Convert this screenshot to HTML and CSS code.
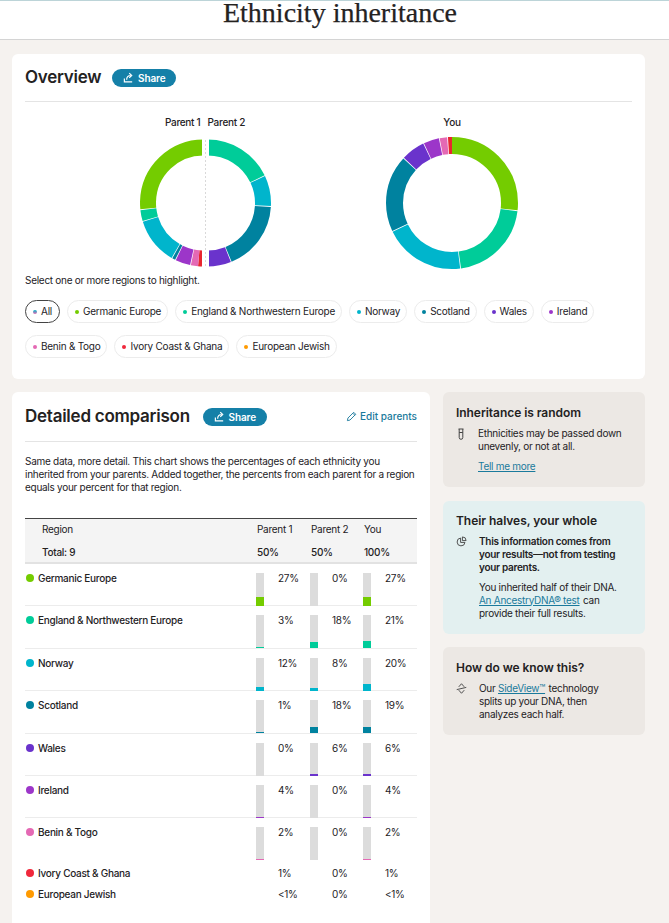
FILE: index.html
```html
<!DOCTYPE html>
<html lang="en">
  <head>
    <meta charset="UTF-8" />
    <meta name="viewport" content="width=device-width, initial-scale=1.0" />
    <title>Ethnicity inheritance</title>
    <link rel="stylesheet" href="styles.css">
  </head>

  <body>
    <header class="top-bar">
      <h1>Ethnicity inheritance</h1>
    </header>

    <main class="page">
      <section class="card overview">
        <div class="card-head">
          <h2>Overview</h2>
          <button class="share" type="button">
            <svg viewBox="0 0 12 12" width="11" height="11"><path d="M1.500 7v3.800h8.500M4 8.500c0-3 1.500-4.700 4.500-4.700M6.800 1.200l2.700 2.600-2.700 2.600" /></svg>
            Share
          </button>
        </div>

        <div class="charts">
          <div class="chart chart-parents">
            <div class="chart-labels"><span>Parent 1</span><span>Parent 2</span></div>
            <svg class="donut" viewBox="0 0 140 132" width="140" height="132">
              <g class="half" transform="rotate(-88.600 68.500 66)">
                <circle cx="68.500" cy="66" r="55.500" pathLength="100" stroke="#e8262f" stroke-dasharray="1 99" stroke-dashoffset="-50" />
                <circle cx="68.500" cy="66" r="55.500" pathLength="100" stroke="#e469b4" stroke-dasharray="1.800 98.200" stroke-dashoffset="-51" />
                <circle cx="68.500" cy="66" r="55.500" pathLength="100" stroke="#9c36c9" stroke-dasharray="3.800 96.200" stroke-dashoffset="-53" />
                <circle cx="68.500" cy="66" r="55.500" pathLength="100" stroke="#00829f" stroke-dasharray="0.800 99.200" stroke-dashoffset="-57" />
                <circle cx="68.500" cy="66" r="55.500" pathLength="100" stroke="#00b5cc" stroke-dasharray="11.800 88.200" stroke-dashoffset="-58" />
                <circle cx="68.500" cy="66" r="55.500" pathLength="100" stroke="#00cc99" stroke-dasharray="2.800 97.200" stroke-dashoffset="-70" />
                <circle cx="68.500" cy="66" r="55.500" pathLength="100" stroke="#74cc00" stroke-dasharray="27 73" stroke-dashoffset="-73" />
              </g>
              <g class="half" transform="rotate(-90 72.500 66)">
                <circle cx="72.500" cy="66" r="55.500" pathLength="100" stroke="#00cc99" stroke-dasharray="17.800 82.200" />
                <circle cx="72.500" cy="66" r="55.500" pathLength="100" stroke="#00b5cc" stroke-dasharray="7.800 92.200" stroke-dashoffset="-18" />
                <circle cx="72.500" cy="66" r="55.500" pathLength="100" stroke="#00829f" stroke-dasharray="17.800 82.200" stroke-dashoffset="-26" />
                <circle cx="72.500" cy="66" r="55.500" pathLength="100" stroke="#6a33cc" stroke-dasharray="6 94" stroke-dashoffset="-44" />
              </g>
              <rect class="split-gap" x="67" y="0" width="7" height="132" />
              <line class="split" x1="70.500" y1="3" x2="70.500" y2="130" />
            </svg>
          </div>

          <div class="chart chart-you">
            <div class="chart-labels"><span>You</span></div>
            <svg class="donut" viewBox="0 0 140 132" width="140" height="132">
              <g class="whole" transform="rotate(-90 70 66)">
                <circle cx="70" cy="66" r="57.500" pathLength="100" stroke="#74cc00" stroke-dasharray="26.800 73.200" />
                <circle cx="70" cy="66" r="57.500" pathLength="100" stroke="#00cc99" stroke-dasharray="20.800 79.200" stroke-dashoffset="-27" />
                <circle cx="70" cy="66" r="57.500" pathLength="100" stroke="#00b5cc" stroke-dasharray="19.800 80.200" stroke-dashoffset="-48" />
                <circle cx="70" cy="66" r="57.500" pathLength="100" stroke="#00829f" stroke-dasharray="18.800 81.200" stroke-dashoffset="-68" />
                <circle cx="70" cy="66" r="57.500" pathLength="100" stroke="#6a33cc" stroke-dasharray="5.800 94.200" stroke-dashoffset="-87" />
                <circle cx="70" cy="66" r="57.500" pathLength="100" stroke="#9c36c9" stroke-dasharray="3.800 96.200" stroke-dashoffset="-93" />
                <circle cx="70" cy="66" r="57.500" pathLength="100" stroke="#e469b4" stroke-dasharray="1.800 98.200" stroke-dashoffset="-97" />
                <circle cx="70" cy="66" r="57.500" pathLength="100" stroke="#e8262f" stroke-dasharray="1 99" stroke-dashoffset="-99" />
              </g>
            </svg>
          </div>
        </div>

        <p class="hint">Select one or more regions to highlight.</p>

        <div class="chips">
          <span class="chip chip-active"><i class="pip pip-all"></i>All</span>
          <span class="chip"><i class="pip germanic"></i>Germanic Europe</span>
          <span class="chip"><i class="pip england"></i>England &amp; Northwestern Europe</span>
          <span class="chip"><i class="pip norway"></i>Norway</span>
          <span class="chip"><i class="pip scotland"></i>Scotland</span>
          <span class="chip"><i class="pip wales"></i>Wales</span>
          <span class="chip"><i class="pip ireland"></i>Ireland</span>
          <span class="chip"><i class="pip benin"></i>Benin &amp; Togo</span>
          <span class="chip"><i class="pip ivory"></i>Ivory Coast &amp; Ghana</span>
          <span class="chip"><i class="pip jewish"></i>European Jewish</span>
        </div>
      </section>

      <div class="lower">
        <section class="card detail">
          <div class="card-head">
            <h2>Detailed comparison</h2>
            <button class="share" type="button">
              <svg viewBox="0 0 12 12" width="11" height="11"><path d="M1.500 7v3.800h8.500M4 8.500c0-3 1.500-4.700 4.500-4.700M6.800 1.200l2.700 2.600-2.700 2.600" /></svg>
              Share
            </button>
            <a class="edit" href="#">
              <svg viewBox="0 0 12 12" width="11" height="11"><path d="M1.500 10.500l.6-2.800L8.400 1.400l2.200 2.200-6.300 6.300zM7.400 2.400l2.200 2.200" /></svg>
              Edit parents
            </a>
          </div>

          <p class="intro">Same data, more detail. This chart shows the percentages of each ethnicity you inherited from your parents. Added together, the percents from each parent for a region equals your percent for that region.</p>

          <div class="table">
            <div class="table-head">
              <div class="grid-row"><span class="region-head">Region</span><span>Parent 1</span><span>Parent 2</span><span>You</span></div>
              <div class="grid-row total"><span class="region-head">Total: 9</span><span>50%</span><span>50%</span><span>100%</span></div>
            </div>

            <div class="grid-row row">
              <span class="name"><i class="dot germanic"></i>Germanic Europe</span>
              <span class="cell"><span class="bar"><i class="germanic" style="height: 27%"></i></span>27%</span>
              <span class="cell"><span class="bar"></span>0%</span>
              <span class="cell"><span class="bar"><i class="germanic" style="height: 27%"></i></span>27%</span>
            </div>
            <div class="grid-row row">
              <span class="name"><i class="dot england"></i>England &amp; Northwestern Europe</span>
              <span class="cell"><span class="bar"><i class="england" style="height: 3%"></i></span>3%</span>
              <span class="cell"><span class="bar"><i class="england" style="height: 18%"></i></span>18%</span>
              <span class="cell"><span class="bar"><i class="england" style="height: 21%"></i></span>21%</span>
            </div>
            <div class="grid-row row">
              <span class="name"><i class="dot norway"></i>Norway</span>
              <span class="cell"><span class="bar"><i class="norway" style="height: 12%"></i></span>12%</span>
              <span class="cell"><span class="bar"><i class="norway" style="height: 8%"></i></span>8%</span>
              <span class="cell"><span class="bar"><i class="norway" style="height: 20%"></i></span>20%</span>
            </div>
            <div class="grid-row row">
              <span class="name"><i class="dot scotland"></i>Scotland</span>
              <span class="cell"><span class="bar"><i class="scotland" style="height: 3%"></i></span>1%</span>
              <span class="cell"><span class="bar"><i class="scotland" style="height: 18%"></i></span>18%</span>
              <span class="cell"><span class="bar"><i class="scotland" style="height: 19%"></i></span>19%</span>
            </div>
            <div class="grid-row row">
              <span class="name"><i class="dot wales"></i>Wales</span>
              <span class="cell"><span class="bar"></span>0%</span>
              <span class="cell"><span class="bar"><i class="wales" style="height: 6%"></i></span>6%</span>
              <span class="cell"><span class="bar"><i class="wales" style="height: 6%"></i></span>6%</span>
            </div>
            <div class="grid-row row">
              <span class="name"><i class="dot ireland"></i>Ireland</span>
              <span class="cell"><span class="bar"><i class="ireland" style="height: 3%"></i></span>4%</span>
              <span class="cell"><span class="bar"></span>0%</span>
              <span class="cell"><span class="bar"><i class="ireland" style="height: 3%"></i></span>4%</span>
            </div>
            <div class="grid-row row row-last">
              <span class="name"><i class="dot benin"></i>Benin &amp; Togo</span>
              <span class="cell"><span class="bar"><i class="benin" style="height: 3%"></i></span>2%</span>
              <span class="cell"><span class="bar"></span>0%</span>
              <span class="cell"><span class="bar"><i class="benin" style="height: 3%"></i></span>2%</span>
            </div>
            <div class="grid-row row-small">
              <span class="name"><i class="dot ivory"></i>Ivory Coast &amp; Ghana</span>
              <span class="cell cell-plain">1%</span>
              <span class="cell cell-plain">0%</span>
              <span class="cell cell-plain">1%</span>
            </div>
            <div class="grid-row row-small">
              <span class="name"><i class="dot jewish"></i>European Jewish</span>
              <span class="cell cell-plain">&lt;1%</span>
              <span class="cell cell-plain">0%</span>
              <span class="cell cell-plain">&lt;1%</span>
            </div>
          </div>
        </section>

        <aside class="side">
          <div class="note note-random">
            <h3>Inheritance is random</h3>
            <div class="note-body">
              <svg viewBox="0 0 10 12" width="10" height="12"><path d="M2.500 1h5M3.200 1v8.500a1.800 1.800 0 0 0 3.600 0V1M3.200 4.500h3.600" /></svg>
              <div>
                <p>Ethnicities may be passed down unevenly, or not at all.</p>
                <p class="more"><a href="#">Tell me more</a></p>
              </div>
            </div>
          </div>

          <div class="note note-halves">
            <h3>Their halves, your whole</h3>
            <div class="note-body">
              <svg viewBox="0 0 12 12" width="11" height="11"><path d="M5 2.200a4.300 4.300 0 1 0 4.800 4.800H5zM7 1a4 4 0 0 1 4 4H7z" /></svg>
              <div>
                <p class="strong">This information comes from your results—not from testing your parents.</p>
                <p class="gap">You inherited half of their DNA. <a href="#">An AncestryDNA® test</a> can provide their full results.</p>
              </div>
            </div>
          </div>

          <div class="note note-know">
            <h3>How do we know this?</h3>
            <div class="note-body">
              <svg viewBox="0 0 12 12" width="11" height="11"><path d="M6 .8L9 4.200M6 .8L3 4.200M3 7.800L6 11.200 9 7.800M.8 7.200L11.200 4.800" /></svg>
              <div>
                <p>Our <a href="#">SideView™</a> technology splits up your DNA, then analyzes each half.</p>
              </div>
            </div>
          </div>
        </aside>
      </div>
    </main>
  </body>
</html>
```

FILE: styles.css
```css
* {
  box-sizing: border-box;
}

body {
  margin: 0;
  background-color: #f5f2ef;
  color: #24221f;
  font-family: Inter, "Liberation Sans", sans-serif;
  font-size: 10px;
  letter-spacing: -0.28px;
  line-height: 13px;
}

h1,
h2,
h3,
p {
  margin: 0;
}

a {
  color: #1a7a9c;
}

.top-bar {
  height: 40px;
  padding-left: 11px;
  background-color: #fff;
  border-top: 1px solid #bcd4d8;
  border-bottom: 1px solid #d4d4d4;
  text-align: center;
}

.top-bar h1 {
  font-family: "Liberation Serif", serif;
  font-size: 28px;
  font-weight: 400;
  letter-spacing: 0;
  line-height: 23px;
  color: #24221f;
  -webkit-text-stroke: 0.25px #24221f;
}

.page {
  padding: 14px 24px 0 12px;
}

.card {
  background-color: #fff;
  border-radius: 6px;
  padding: 0 13px;
}

.card-head {
  display: flex;
  align-items: center;
  height: 48px;
  border-bottom: 1px solid #e4e4e4;
}

.card-head h2 {
  font-size: 17px;
  font-weight: 600;
  letter-spacing: -0.25px;
}

.share {
  display: inline-flex;
  align-items: center;
  justify-content: center;
  gap: 4px;
  width: 64px;
  height: 18px;
  margin-left: 13px;
  padding: 0;
  border: 0;
  border-radius: 9px;
  background-color: #1580a8;
  color: #fff;
  font-family: inherit;
  font-size: 10px;
  font-weight: 600;
  letter-spacing: -0.1px;
}

.overview .share {
  margin-left: 11px;
}

.share svg {
  fill: none;
  stroke: #fff;
  stroke-width: 1.3;
}

.edit {
  display: inline-flex;
  align-items: center;
  gap: 3px;
  margin-left: auto;
  font-weight: 500;
  letter-spacing: 0;
  text-decoration: none;
  white-space: nowrap;
}

.edit svg {
  fill: none;
  stroke: #1a7a9c;
  stroke-width: 1;
}

.overview {
  height: 325px;
}

.charts {
  display: flex;
  height: 163px;
  padding-left: 110px;
  gap: 107px;
}

.chart {
  display: flex;
  flex-direction: column;
  width: 140px;
}

.chart-labels {
  display: flex;
  flex: none;
  justify-content: center;
  gap: 7px;
  height: 35px;
  padding-top: 14px;
  font-size: 10px;
  font-weight: 500;
}

.donut {
  display: block;
  flex: none;
}

.donut circle {
  fill: none;
}

.half circle {
  stroke-width: 16;
}

.whole circle {
  stroke-width: 17;
}

.split-gap {
  fill: #fff;
}

.split {
  stroke: #d9d9d9;
  stroke-width: 1;
  stroke-dasharray: 2 2;
}

.hint {
  margin-top: 9px;
}

.chips {
  display: flex;
  flex-wrap: wrap;
  gap: 12px 7px;
  margin-top: 13px;
  letter-spacing: -0.25px;
}

.chip {
  display: inline-flex;
  align-items: center;
  gap: 4px;
  height: 23px;
  padding: 0 6px 0 7px;
  border: 1px solid #ececec;
  border-radius: 12px;
}

.chip-active {
  padding-right: 7px;
  border-color: #444;
}

.pip {
  width: 4px;
  height: 4px;
  border-radius: 50%;
}

.pip-all {
  background: linear-gradient(#00b5cc, #e469b4);
}

.germanic {
  background-color: #74cc00;
}

.england {
  background-color: #00cc99;
}

.norway {
  background-color: #00b5cc;
}

.scotland {
  background-color: #00829f;
}

.wales {
  background-color: #6a33cc;
}

.ireland {
  background-color: #9c36c9;
}

.benin {
  background-color: #e469b4;
}

.ivory {
  background-color: #f0283c;
}

.jewish {
  background-color: #ff9a00;
}

.lower {
  display: grid;
  grid-template-columns: 418px 202px;
  gap: 13px;
  margin-top: 13px;
}

.detail {
  height: 531px;
  border-radius: 6px 6px 0 0;
}

.detail .card-head {
  height: 50px;
}

.intro {
  margin-top: 13px;
}

.table {
  margin-top: 24px;
  border-top: 1px solid #444;
}

.grid-row {
  display: grid;
  grid-template-columns: 231px 54px 53px 1fr;
}

.table-head {
  height: 45px;
  padding-top: 4px;
  background-color: #f4f4f4;
  border-bottom: 2px solid #e2e2e2;
}

.table-head span:not(.region-head) {
  padding-left: 1px;
}

.region-head {
  padding-left: 17px;
}

.total {
  margin-top: 10px;
  font-weight: 500;
}

.row {
  height: 42.4px;
  padding-top: 9px;
  line-height: 11px;
  border-bottom: 1px solid #ececec;
}

.row-last {
  height: 44.5px;
  border-bottom: 0;
}

.row-small {
  height: 21px;
  padding-top: 5px;
  line-height: 11px;
}

.name {
  display: flex;
  align-items: flex-start;
  gap: 4px;
  font-weight: 500;
}

.dot {
  flex: none;
  width: 8px;
  height: 8px;
  margin: 1px 0 0 1px;
  border-radius: 50%;
}

.cell {
  display: flex;
  align-items: flex-start;
  gap: 14px;
}

.cell-plain {
  padding-left: 22px;
}

.bar {
  display: flex;
  align-items: flex-end;
  flex: none;
  width: 8px;
  height: 33px;
  background-color: #dcdcdc;
}

.bar i {
  display: block;
  width: 100%;
}

.side {
  display: flex;
  flex-direction: column;
  gap: 13.5px;
}

.note {
  padding: 13px 22px 0 13px;
  border-radius: 6px;
}

.note-random {
  height: 95px;
  background-color: #ece8e4;
}

.note-halves {
  height: 133px;
  padding-top: 12px;
  background-color: #e3f0f0;
}

.note-know {
  height: 88px;
  background-color: #ece8e4;
}

.note h3 {
  font-size: 12px;
  font-weight: 600;
  letter-spacing: -0.05px;
  line-height: 15px;
  white-space: nowrap;
}

.note-body {
  display: flex;
  gap: 12px;
  margin-top: 7px;
}

.note-body a {
  margin-right: 1px;
}

.note-body svg {
  flex: none;
  margin-top: 1px;
  fill: none;
  stroke: #444;
  stroke-width: 1;
}

.more {
  margin-top: 7px;
}

.strong {
  font-weight: 600;
}

.gap {
  margin-top: 7px;
}
```
